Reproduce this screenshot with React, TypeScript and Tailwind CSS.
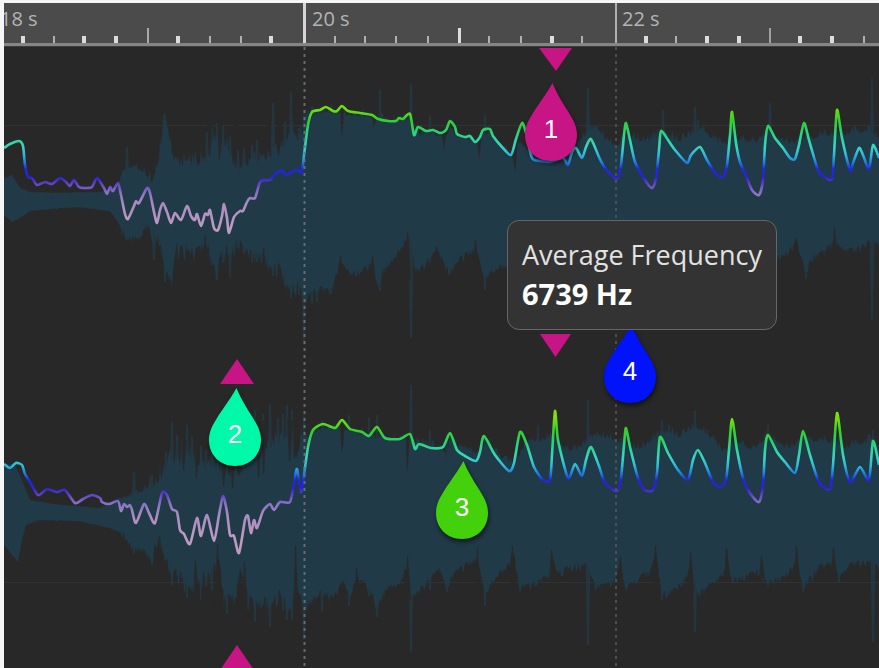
import React from "react";

type Point = [number, number];

const pts = (s: string): Point[] =>
  s
    .trim()
    .split(/\s+/)
    .map((p) => p.split(",").map(Number) as Point);

// Ruler ticks: position and whether the tick is drawn heavy
const MINOR: [number, boolean][] = [
  [23, true], [54, false], [84, true], [116, true], [178, true], [210, false], [241, false], [271, true],
  [335, false], [365, false], [396, false], [428, false], [489, false], [521, false], [552, true], [582, false],
  [646, true], [676, false], [707, true], [739, true], [800, true], [832, true], [864, false],
];

const CURVE_LEFT = pts(`4,148 10,144 19,141 23,146 25,165 28,177 32,178 37,185 45,182 52,184 60,178 66,182 70,186 74,180 79,187 85,188 92,187 97,178 104,188 107,194 110,187 113,191 118,183 121,195 125,214 128,219 134,206 136,201 139,203 147,188 150,193 154,212 157,223 160,210 163,203 167,212 171,223 175,213 181,220 187,206 191,216 195,220 197,214 201,226 205,214 208,215 210,210 214,228 218,230 222,216 224,204 227,218 229,233 234,217 240,211 243,211 247,202 250,198 255,198 260,182 265,180 270,180 276,173 282,171 286,175 292,172 298,170 302,172 304,155 308,125 312,112 320,110 326,107 333,111 337,111 342,106 348,111 360,113 372,115 378,119 388,121 396,121 399,118 403,119 410,114 414,135 418,127 426,131 433,130 440,133 446,130 450,121 455,127 457,134 465,137 470,136 475,142 480,137 483,130 490,129 493,136 502,147 511,155 516,139 522,123 526,133 532,158 540,161 550,162 563,158 568,165 572,152 576,148 582,158 586,147 591,139 599,157 605,168 617,179 621,165 624,135 626,123 630,140 635,162 645,180 652,188 656,178 659,150 661,131 668,140 675,150 687,163 691,155 700,147 707,160 715,173 723,177 727,165 730,135 732,112 736,143 740,162 747,178 752,190 759,195 763,180 765,145 768,126 775,138 783,148 790,158 795,159 799,145 804,123 809,140 818,170 825,177 832,179 834,155 837,110 842,138 850,170 853,163 859,148 863,155 869,169 873,145 879,158`);

const CURVE_RIGHT = pts(`4,464 10,468 16,463 22,465 25,474 30,482 38,495 47,489 57,492 65,490 75,503 83,499 92,495 100,498 102,502 109,504 118,501 121,511 124,504 127,507 130,505 132,510 136,523 144,504 149,513 155,523 162,493 167,495 172,509 177,512 180,530 184,534 190,544 197,518 201,536 207,515 214,541 219,515 223,496 227,512 230,535 234,536 239,553 245,520 248,516 251,533 254,520 257,528 263,511 270,504 274,510 280,502 290,502 294,483 297,469 301,492 304,475 308,447 313,430 323,424 335,428 342,420 350,429 362,432 369,436 377,427 385,438 400,439 410,434 415,449 419,444 431,448 443,447 450,433 457,450 465,456 476,461 480,452 484,436 495,455 509,471 514,463 520,432 527,445 534,467 543,480 550,480 552,455 555,411 558,440 568,478 575,464 582,476 586,460 591,447 599,466 605,483 617,491 621,478 624,445 626,428 630,447 638,478 645,490 653,490 657,473 660,437 668,453 678,470 688,480 693,460 698,450 705,463 713,482 720,487 726,480 729,450 732,419 737,450 743,478 750,493 759,502 763,485 765,450 768,435 777,452 785,462 795,473 799,455 803,431 810,455 819,482 830,489 833,465 837,413 843,455 850,482 860,467 869,480 873,441 879,465`);

const TOP_LEFT = pts(`4,178 12,175 20,188 30,192 60,193 100,192 118,186 122,170 127,168 135,167 143,170 150,182 155,172 160,150 164,118 166,118 169,145 176,162 190,162 203,160 208,155 212,142 216,140 222,148 227,140 232,162 240,165 250,158 262,158 272,152 280,152 288,140 293,128 298,138 303,130 306,115 312,112 340,112 342,142 344,113 372,116 373,132 376,119 411,118 415,134 442,134 444,152 447,132 456,133 477,143 479,160 482,134 490,131 500,146 513,157 515,172 518,140 530,150 560,138 575,145 590,128 597,127 606,138 616,145 630,135 645,141 663,132 680,140 692,132 702,127 712,137 724,142 740,138 755,142 768,130 785,141 800,142 823,134 840,134 858,132 868,130 879,138`);
const BOTTOM_LEFT = pts(`4,215 12,222 20,218 30,211 60,208 80,207 110,211 118,222 122,232 130,238 140,234 148,225 153,236 158,240 163,255 166,276 172,276 177,246 190,250 200,250 205,238 212,262 217,272 222,252 230,260 235,242 250,250 258,256 265,258 272,270 280,266 285,280 292,288 298,286 304,300 310,292 320,288 332,290 340,260 350,274 363,270 373,262 378,286 383,270 390,265 405,242 410,236 415,270 420,268 437,250 443,258 450,274 460,258 473,250 478,255 484,280 490,272 503,265 560,262 620,260 700,260 782,255 790,248 796,240 800,252 806,272 812,256 826,250 835,240 842,250 856,250 869,240 879,246`);
const TOP_RIGHT = pts(`4,463 15,465 22,480 30,500 60,505 100,508 120,497 130,495 140,491 150,487 163,473 170,460 180,462 187,455 200,462 215,467 230,472 240,470 252,460 262,446 270,444 280,440 287,438 292,455 297,455 303,430 308,440 313,430 340,427 342,458 345,428 370,436 385,438 406,439 407,472 410,438 430,446 443,449 446,462 449,440 480,455 486,440 505,460 515,462 525,442 540,440 553,435 566,450 580,446 588,438 599,434 619,440 629,447 645,446 655,438 669,430 679,436 695,425 712,436 722,450 739,441 752,450 769,434 785,447 812,440 826,440 845,447 856,445 872,438 879,446`);
const BOTTOM_RIGHT = pts(`4,545 18,562 22,540 26,525 40,520 80,521 110,528 125,535 133,548 140,545 150,558 160,540 170,572 180,572 188,586 200,584 210,575 218,556 224,596 232,600 240,572 250,596 258,606 265,598 270,606 280,594 290,608 296,590 304,606 310,602 320,592 333,598 343,580 350,598 357,574 370,590 377,606 387,588 399,585 407,566 412,598 423,585 440,568 447,586 457,570 477,558 485,595 493,580 510,562 513,550 520,588 540,580 550,575 553,558 557,572 573,566 587,565 595,586 616,581 620,560 626,588 650,570 656,555 662,594 675,590 688,575 691,560 697,595 712,582 725,572 727,555 732,581 758,570 767,584 785,574 797,560 803,586 819,566 835,563 839,578 850,565 862,562 872,560 879,570`);

// Short transients: x, top, bottom
const SPIKES_LEFT: [number, number, number][] = [
  [127, 147, 240], [154, 175, 260], [165, 114, 282], [171, 160, 281], [207, 132, 245], [212, 126, 265], [217, 123, 280], [223, 126, 262], [230, 136, 278],
  [238, 150, 248], [244, 148, 254], [252, 145, 262], [257, 140, 262], [273, 103, 276], [285, 122, 286], [291, 92, 298], [299, 128, 295], [304, 110, 345], [312, 106, 304], [317, 108, 302], [331, 105, 294],
  [380, 90, 291], [411, 84, 338], [430, 115, 256], [485, 115, 290], [588, 88, 250], [663, 110, 250], [695, 107, 250], [698, 120, 250], [732, 125, 250],
  [770, 103, 250], [806, 132, 279], [820, 133, 252], [855, 126, 250], [872, 78, 320],
];
const SPIKES_RIGHT: [number, number, number][] = [
  [134, 472, 554], [152, 474, 565], [166, 452, 560], [172, 422, 585], [177, 435, 575], [182, 440, 578], [187, 425, 598], [192, 436, 590], [201, 446, 600], [206, 450, 586], [212, 450, 590],
  [227, 465, 614], [236, 455, 598], [248, 448, 610], [255, 410, 622], [263, 414, 605], [270, 404, 627], [278, 418, 604], [283, 414, 610], [287, 405, 620], [292, 410, 620], [304, 415, 640],
  [322, 420, 612], [349, 415, 606], [369, 417, 596], [377, 415, 617], [411, 385, 652], [430, 430, 590], [447, 435, 592], [485, 435, 606], [538, 425, 580], [588, 400, 645],
  [662, 420, 600], [669, 425, 595], [695, 411, 632], [707, 430, 586], [768, 425, 586], [803, 430, 592], [839, 435, 582], [873, 430, 642],
];

// Gaps that cut into the body: x, open end, tip
const GAPS_LEFT: [number, number, number][] = [
  [161, 285, 245], [210, 118, 156], [220, 118, 160], [227, 284, 246], [236, 118, 168], [248, 140, 166], [264, 284, 248], [269, 110, 148], [280, 110, 150],
  [341, 292, 256], [373, 284, 256], [408, 280, 232], [437, 268, 246], [476, 268, 240], [835, 260, 228], [797, 260, 238],
];
const GAPS_RIGHT: [number, number, number][] = [
  [160, 566, 536], [184, 440, 470], [196, 600, 560], [197, 440, 478], [204, 600, 572], [218, 612, 544], [224, 455, 486], [233, 455, 488], [240, 616, 574], [245, 612, 562], [259, 430, 478], [264, 420, 474],
  [280, 626, 590], [290, 420, 462], [296, 622, 546], [357, 606, 568], [408, 600, 556], [478, 600, 548], [513, 590, 546], [552, 580, 550], [621, 590, 556], [656, 590, 546], [691, 592, 552], [727, 580, 548], [762, 578, 556], [797, 580, 546], [834, 576, 548],
];

function at(line: Point[], x: number) {
  for (let i = 1; i < line.length; i++) {
    if (x <= line[i][0]) {
      const [x0, y0] = line[i - 1];
      const [x1, y1] = line[i];
      return y0 + ((y1 - y0) * (x - x0)) / (x1 - x0);
    }
  }
  return line[line.length - 1][1];
}

const noise = (n: number) => {
  const v = Math.sin(n * 127.1) * 43758.5453;
  return v - Math.floor(v);
};

function envelope(top: Point[], bottom: Point[]) {
  const up: string[] = [];
  const down: string[] = [];
  for (let x = 4; x <= 879; x += 1) {
    const a = x < 120 ? 1 : x < 150 ? 8 : x < 304 ? 18 : 9;
    up.push(`${x},${(at(top, x) - noise(x) ** 2 * a + a / 4).toFixed(1)}`);
    down.push(`${x},${(at(bottom, x) + noise(x + 977) ** 2 * a - a / 4).toFixed(1)}`);
  }
  return `M${up.join("L")}L${down.reverse().join("L")}Z`;
}

function smooth(line: Point[]) {
  let d = `M${line[0][0]},${line[0][1]}`;
  for (let i = 1; i < line.length; i++) {
    const [x0, y0] = line[i - 1];
    const [x1, y1] = line[i];
    const prev = line[Math.max(0, i - 2)];
    const next = line[Math.min(line.length - 1, i + 1)];
    const k = 0.12;
    d += `C${x0 + (x1 - prev[0]) * k},${y0 + (y1 - prev[1]) * k} ${x1 - (next[0] - x0) * k},${y1 - (next[1] - y0) * k} ${x1},${y1}`;
  }
  return d;
}

const STOPS: [number, string][] = [
  [105, "#84dc12"], [112, "#5fdb17"], [120, "#33d12c"], [128, "#2bd15c"], [138, "#2fd698"], [147, "#38d5c0"], [155, "#2fb8d8"],
  [163, "#1f78dc"], [169, "#1e28e0"], [177, "#2a22cf"], [183, "#5b3fc4"], [192, "#8670c0"], [204, "#ab8cc0"], [225, "#bd9ac4"],
];

function ToneGradient({ id, shift }: { id: string; shift: number }) {
  return (
    <linearGradient id={id} gradientUnits="userSpaceOnUse" x1="0" x2="0" y1={105 + shift} y2={225 + shift}>
      {STOPS.map(([y, c]) => (
        <stop key={y} offset={(y - 105) / 120} stopColor={c} />
      ))}
    </linearGradient>
  );
}

type Span = [number, number, number];

function Channel({ top, bottom, spikes, gaps, curve, tone }: { top: Point[]; bottom: Point[]; spikes: Span[]; gaps: Span[]; curve: Point[]; tone: string }) {
  return (
    <g>
      {spikes.map(([x, y0, y1]) => (
        <path key={x} d={`M${x - 1},${y0}h2L${x + 3},${(y0 + y1) / 2}L${x + 1},${y1}h-2L${x - 3},${(y0 + y1) / 2}Z`} fill="#213b48" fillOpacity="0.75" />
      ))}
      <path d={envelope(top, bottom)} fill="#203a47" />
      {gaps.map(([x, open, tip]) => (
        <path key={x} d={`M${x - 3},${open}L${x - 1},${tip}h1L${x + 3},${open}Z`} fill="#282828" fillOpacity="0.85" />
      ))}
      <path d={smooth(curve)} fill="none" stroke={`url(#${tone})`} strokeWidth="2.6" strokeLinejoin="round" />
    </g>
  );
}

function Pin({ label, color, className }: { label: string; color: string; className: string }) {
  return (
    <button type="button" className={`absolute h-20 w-[52px] ${className}`}>
      <svg viewBox="0 0 52 80" className="block h-20 w-[52px] overflow-visible drop-shadow-[1px_3px_2px_rgba(0,0,0,0.55)]">
        <path d="M27.500 1C30 8 37 20 44 31C49 39 52 45 52 53C52 68 41 79 26 79C11 79 0 68 0 53C0 45 3 39 8 31C15 20 24 8 27.500 1Z" fill={color} />
      </svg>
      <span className="absolute inset-x-0 top-8 text-center font-['Liberation_Sans',sans-serif] text-[26px] leading-[30px] text-white">{label}</span>
    </button>
  );
}

function Ruler() {
  return (
    <header className="relative h-11 shrink-0 overflow-hidden bg-[#4b4b4b]">
      <svg viewBox="4 3 875 44" preserveAspectRatio="none" className="absolute inset-0 h-full w-full">
        {MINOR.map(([x, heavy]) => (
          <rect key={x} x={heavy ? x - 2 : x - 1} y="36" width={heavy ? 4 : 2} height="8" fill={heavy ? "#dcdcdc" : "#b0b0b0"} />
        ))}
        <rect x="147" y="28" width="2" height="16" fill="#a8a8a8" />
        <rect x="458" y="28" width="3" height="16" fill="#dcdcdc" />
        <rect x="769" y="28" width="2" height="16" fill="#a0a0a0" />
        <rect x="303" y="3" width="3" height="41" fill="#d6d6d6" />
        <rect x="615" y="3" width="2" height="41" fill="#b0b0b0" />
        <rect x="4" y="43" width="875" height="3" fill="#858585" />
        <rect x="4" y="46" width="875" height="1" fill="#3c3c3c" />
      </svg>
      <div className="relative grid grid-cols-[308px_310px_1fr] font-['Open_Sans',sans-serif] text-xl leading-[32px] text-[#b4b4b4]">
        <span className="-ml-1">18 s</span>
        <span>20 s</span>
        <span>22 s</span>
      </div>
    </header>
  );
}

export default function App() {
  return (
    <div className="flex h-screen flex-col overflow-hidden bg-[#f6f6f6] pl-1 pt-[3px]">
      <Ruler />
      <main className="relative min-h-0 flex-1 bg-[#282828]">
        <svg viewBox="4 47 875 621" preserveAspectRatio="none" className="block h-full w-full">
          <defs>
            <ToneGradient id="tone-left" shift={0} />
            <ToneGradient id="tone-right" shift={311} />
          </defs>
          <path d="M4,125.500H879M4,582.500H879" stroke="#3a3a3a" strokeWidth="1" opacity="0.6" />
          <Channel top={TOP_LEFT} bottom={BOTTOM_LEFT} spikes={SPIKES_LEFT} gaps={GAPS_LEFT} curve={CURVE_LEFT} tone="tone-left" />
          <Channel top={TOP_RIGHT} bottom={BOTTOM_RIGHT} spikes={SPIKES_RIGHT} gaps={GAPS_RIGHT} curve={CURVE_RIGHT} tone="tone-right" />
          <path d="M304.500,47V668" stroke="#707678" strokeWidth="2" strokeDasharray="3 4" opacity="0.85" />
          <path d="M616,47V668" stroke="#565b5d" strokeWidth="2" strokeDasharray="3 4" opacity="0.75" />
          <g fill="#c71585">
            <path d="M539,48H572L556,71Z" />
            <path d="M540,334H571L555.500,357Z" />
            <path d="M220,384H254L237,359Z" />
            <path d="M220,670H254L237,645Z" />
          </g>
        </svg>
        <Pin label="1" color="#c71585" className="left-[521px] top-[35px]" />
        <Pin label="2" color="#00f9a8" className="left-[205px] top-[340px]" />
        <Pin label="3" color="#43d10b" className="left-[432px] top-[413px]" />
        <Pin label="4" color="#0013fa" className="left-[600px] top-[277px]" />
        <div role="tooltip" className="absolute left-[503px] top-[173px] rounded-xl border border-[#666666] bg-[#333333] px-[14px] pb-4 pt-[14px] font-['Open_Sans',sans-serif] leading-[39px]">
          <p className="whitespace-nowrap text-[27px] text-[#e2e2e2]">Average Frequency</p>
          <p className="whitespace-nowrap text-[29px] font-bold text-white">6739 Hz</p>
        </div>
      </main>
    </div>
  );
}
